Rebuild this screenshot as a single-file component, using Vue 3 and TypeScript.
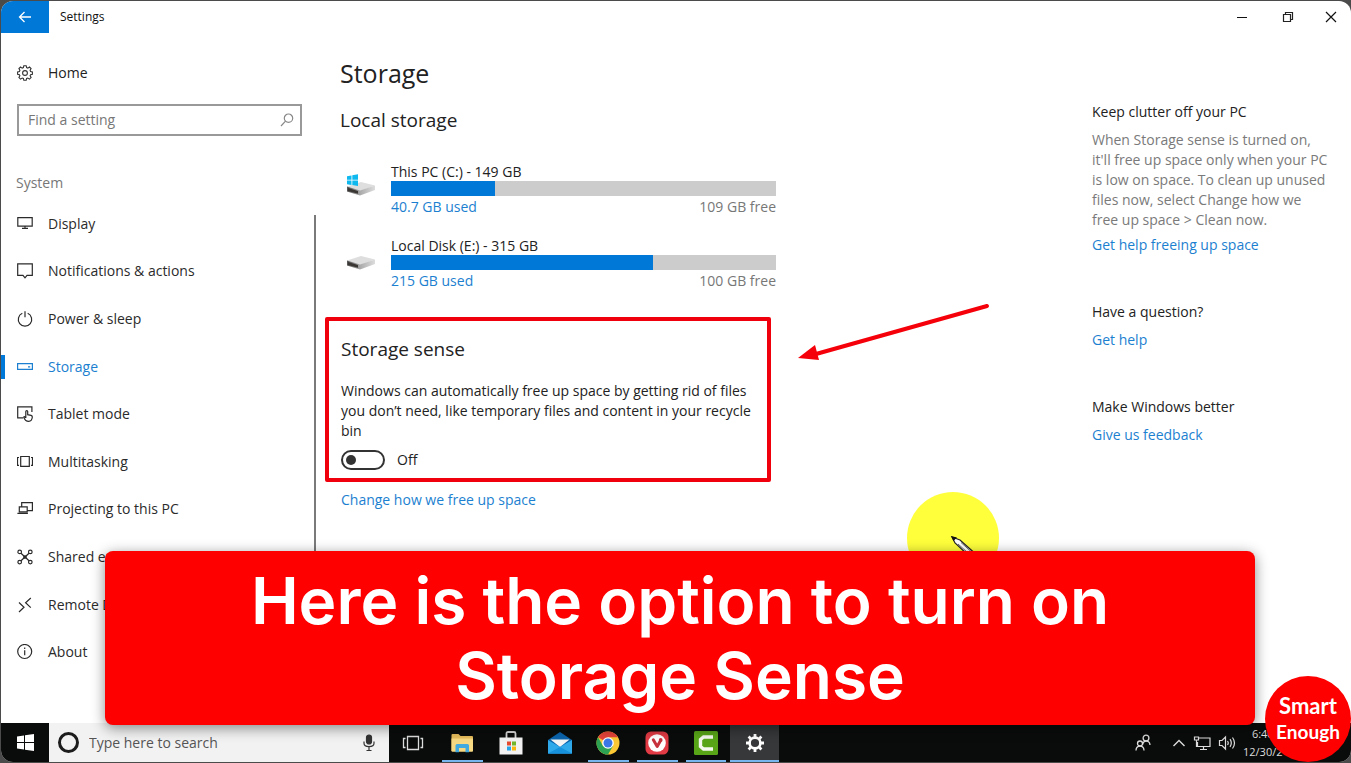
<script setup lang="ts">
import { ref } from 'vue'

interface NavItem {
  id: string
  label: string
}

interface Drive {
  id: string
  label: string
  used: string
  free: string
  percent: number
  system: boolean
}

interface HelpBlock {
  title: string
  text?: string
  link: string
}

interface TaskApp {
  id: string
  label: string
  running: boolean
}

const navItems: NavItem[] = [
  { id: 'display', label: 'Display' },
  { id: 'notifications', label: 'Notifications & actions' },
  { id: 'power', label: 'Power & sleep' },
  { id: 'storage', label: 'Storage' },
  { id: 'tablet', label: 'Tablet mode' },
  { id: 'multitasking', label: 'Multitasking' },
  { id: 'projecting', label: 'Projecting to this PC' },
  { id: 'shared', label: 'Shared experiences' },
  { id: 'remote', label: 'Remote Desktop' },
  { id: 'about', label: 'About' },
]

const drives: Drive[] = [
  { id: 'c', label: 'This PC (C:) - 149 GB', used: '40.7 GB used', free: '109 GB free', percent: 27, system: true },
  { id: 'e', label: 'Local Disk (E:) - 315 GB', used: '215 GB used', free: '100 GB free', percent: 68, system: false },
]

const helpBlocks: HelpBlock[] = [
  {
    title: 'Keep clutter off your PC',
    text: "When Storage sense is turned on, it'll free up space only when your PC is low on space. To clean up unused files now, select Change how we free up space > Clean now.",
    link: 'Get help freeing up space',
  },
  { title: 'Have a question?', link: 'Get help' },
  { title: 'Make Windows better', link: 'Give us feedback' },
]

const apps: TaskApp[] = [
  { id: 'taskview', label: 'Task view', running: false },
  { id: 'explorer', label: 'File Explorer', running: true },
  { id: 'store', label: 'Store', running: false },
  { id: 'mail', label: 'Mail', running: false },
  { id: 'chrome', label: 'Chrome', running: true },
  { id: 'vivaldi', label: 'Vivaldi', running: true },
  { id: 'camtasia', label: 'Camtasia', running: true },
  { id: 'settings', label: 'Settings', running: true },
]

const current = ref('storage')
const query = ref('')
const senseOn = ref(false)
</script>

<template>
  <div class="desktop">
    <div class="screen">
      <header class="titlebar">
        <button class="back" type="button" aria-label="Back">
          <svg width="14" height="12" viewBox="0 0 14 12" fill="none" stroke="#fff" stroke-width="1.3"><path d="M13 6H1.5M6.5 1 1.5 6l5 5" /></svg>
        </button>
        <span class="window-title">Settings</span>
        <div class="window-buttons">
          <button type="button" aria-label="Minimize">
            <svg width="12" height="12" viewBox="0 0 12 12" stroke="#111" stroke-width="1.2"><path d="M1 6.5h10" /></svg>
          </button>
          <button type="button" aria-label="Restore">
            <svg width="12" height="12" viewBox="0 0 12 12" fill="none" stroke="#222" stroke-width="1.2"><path d="M1.5 3.5h7v7h-7zM3.5 3.500V1.500h7v7h-2" /></svg>
          </button>
          <button type="button" aria-label="Close">
            <svg width="12" height="12" viewBox="0 0 12 12" stroke="#111" stroke-width="1.2"><path d="m1 1 10 10M11 1 1 11" /></svg>
          </button>
        </div>
      </header>

      <div class="content">
        <aside class="sidebar">
          <a class="home" href="#home">
            <svg class="icon" viewBox="0 0 16 16" fill="none" stroke="#333" stroke-width="1.1">
              <path d="M6.800 .7h2.400l.4 1.900 1.200.5 1.700-1.100 1.600 1.600-1 1.700.5 1.200 1.800.4v2.300l-1.800.4-.5 1.200 1 1.700-1.600 1.600-1.700-1.100-1.200.5-.4 1.800H6.800l-.4-1.800-1.200-.5-1.700 1.100-1.600-1.600 1-1.700-.5-1.200-1.800-.4V6.900l1.800-.4.5-1.200-1-1.700 1.600-1.600 1.700 1.100 1.200-.5z" />
              <circle cx="8" cy="8" r="2.400" />
            </svg>
            <span>Home</span>
          </a>
          <div class="search">
            <input v-model="query" type="text" placeholder="Find a setting" aria-label="Find a setting" />
            <svg width="14" height="14" viewBox="0 0 14 14" fill="none" stroke="#888" stroke-width="1.2"><circle cx="8.500" cy="5.200" r="4.200" /><path d="M5.500 8.200 1 13" /></svg>
          </div>
          <h2 class="group">System</h2>
          <nav class="nav" aria-label="System">
            <a
              v-for="item in navItems"
              :key="item.id"
              :href="'#' + item.id"
              :class="{ active: item.id === current }"
              @click.prevent="current = item.id"
            >
              <svg class="icon" viewBox="0 0 16 16" fill="none" stroke="currentColor" stroke-width="1.2">
                <template v-if="item.id === 'display'"><path d="M.8 1.600h14.400v8.600H.8zM8 10.200v2M5 12.300h6" /></template>
                <template v-else-if="item.id === 'notifications'"><path d="M.7 .8h14.600v11.500H10l-2 2.500-2-2.500H.7z" /></template>
                <template v-else-if="item.id === 'power'"><path d="M5.300 2.300a6.700 6.700 0 1 0 5.400 0M8 .3v6" /></template>
                <template v-else-if="item.id === 'storage'"><path d="M.6 4.700h14.800v5.600H.6zM11 7.800h2.200" /></template>
                <template v-else-if="item.id === 'tablet'"><path d="M6 11.800H.7V.9h14.200v5M8.800 12V5.600c0-1.300 1.900-1.300 1.900 0v3.100l3.400.7c1 .3 1.300 1 1.200 1.900-.3 2.500-1.300 4.100-3.600 4.100-2.600 0-4-1.600-4.900-3.900-.3-1.100 1.100-1.400 2 .5" /></template>
                <template v-else-if="item.id === 'multitasking'"><path d="M3.700 2.500h8.600v9.800H3.700zM2 3.500H.5v7.800H2M14 3.500h1.500v7.800H14" /></template>
                <template v-else-if="item.id === 'projecting'"><path d="M4.700 5.500V1.600h10.700v8H10.400M2.300 5.800h7.900v5H2.300zM.4 12.300h10.500" /></template>
                <template v-else-if="item.id === 'shared'">
                  <path d="m4 4.200 8 7.600M12 4.200l-8 7.600" />
                  <circle cx="2.700" cy="2.900" r="1.800" /><circle cx="13.300" cy="2.900" r="1.800" /><circle cx="2.700" cy="13.100" r="1.800" /><circle cx="13.300" cy="13.100" r="1.800" /><circle cx="8" cy="8" r="1.200" fill="currentColor" />
                </template>
                <template v-else-if="item.id === 'remote'"><path d="m2 5.500 5 4.800L2 15M13.800 1 8.600 5.800l5.200 4.800" /></template>
                <template v-else><circle cx="7.700" cy="7.500" r="7" /><path d="M7.700 6.300v5M7.700 3.500V5" /></template>
              </svg>
              <span>{{ item.label }}</span>
            </a>
          </nav>
        </aside>

        <main class="main">
          <h1>Storage</h1>
          <h2>Local storage</h2>
          <div class="drives">
            <section v-for="drive in drives" :key="drive.id" class="drive">
              <svg class="drive-icon" width="30" height="24" viewBox="0 0 30 24">
                <defs>
                  <linearGradient :id="'front-' + drive.id" x1="0" x2="1"><stop offset="0" stop-color="#555" /><stop offset="1" stop-color="#a8a8a8" /></linearGradient>
                  <linearGradient :id="'side-' + drive.id" x1="0" x2="1"><stop offset="0" stop-color="#aaa" /><stop offset="1" stop-color="#ddd" /></linearGradient>
                </defs>
                <path d="M1 13.500 15 9l14 3.500L14 18z" fill="#dedede" />
                <path d="M1 13.500 14 17.500v5L1 18.500z" :fill="`url(#front-${drive.id})`" />
                <path d="m14 17.500 15-5v4.500l-15 5.500z" :fill="`url(#side-${drive.id})`" />
                <path d="m2 15 10 3.100v2.600L2 17.900z" fill="#3a3634" />
                <path v-if="drive.system" d="M1 3.200 5.500 2.400v4.300H1zM6.300 2.200 12 1.200v5.500H6.300zM1 7.500h4.500v4.400L1 11.200zM6.300 7.500H12V13l-5.700-.9z" fill="#0fb8ee" />
              </svg>
              <div class="drive-body">
                <span class="drive-name">{{ drive.label }}</span>
                <div class="bar" role="progressbar" :aria-valuenow="drive.percent" aria-valuemin="0" aria-valuemax="100" :aria-label="drive.label">
                  <div class="fill" :style="{ width: drive.percent + '%' }"></div>
                </div>
                <div class="usage">
                  <a :href="'#drive-' + drive.id">{{ drive.used }}</a>
                  <span>{{ drive.free }}</span>
                </div>
              </div>
            </section>
          </div>

          <section class="sense">
            <h2>Storage sense</h2>
            <p>Windows can automatically free up space by getting rid of files you don’t need, like temporary files and content in your recycle bin</p>
            <label class="switch">
              <input v-model="senseOn" type="checkbox" role="switch" />
              <span>{{ senseOn ? 'On' : 'Off' }}</span>
            </label>
          </section>
          <a class="change" href="#change">Change how we free up space</a>
        </main>

        <aside class="help">
          <section v-for="block in helpBlocks" :key="block.title">
            <h3>{{ block.title }}</h3>
            <p v-if="block.text">{{ block.text }}</p>
            <a href="#help">{{ block.link }}</a>
          </section>
        </aside>
      </div>

      <footer class="taskbar">
        <button class="start" type="button" aria-label="Start">
          <svg width="17" height="17" viewBox="0 0 17 17" fill="#fff"><path d="M0 2.500 7 1.500V8H0zM8 1.300 17 0v8H8zM0 9h7v6.500l-7-1zM8 9h9v8l-9-1.300z" /></svg>
        </button>
        <div class="cortana">
          <span class="ring"></span>
          <input type="text" placeholder="Type here to search" aria-label="Type here to search" />
          <svg width="12" height="18" viewBox="0 0 12 18" fill="none" stroke="#333" stroke-width="1.200"><rect x="3.500" y="1" width="5" height="9" rx="2.500" fill="#333" /><path d="M1 7.500v1.700c0 4.500 10 4.500 10 0V7.500M6 13v3.500M3.500 16.500h5" /></svg>
        </div>
        <div class="apps">
          <button
            v-for="app in apps"
            :key="app.id"
            type="button"
            :aria-label="app.label"
            :class="{ running: app.running, focused: app.id === 'settings' }"
          >
            <svg width="24" height="24" viewBox="0 0 24 24">
              <template v-if="app.id === 'taskview'">
                <path d="M6.500 5.500h11v13h-11zM4.500 7.500h-2v9h2M19.500 7.500h2v9h-2" fill="none" stroke="#ddd" stroke-width="1.300" />
              </template>
              <template v-else-if="app.id === 'explorer'">
                <path d="M1.500 4q0-1 1-1h6l2 2h11.500q1 0 1 1v14h-21.500z" fill="#e7bd5c" />
                <path d="M1.500 7.500h21.500V20q0 .8-1 .8H2.500q-1 0-1-1z" fill="#f8d983" />
                <path d="M5.500 14.500q0-1.500 1.500-1.500h10.500q1.500 0 1.500 1.500v6.800h-3.500V17h-6.500v4.300H5.500z" fill="#3fa9e0" />
              </template>
              <template v-else-if="app.id === 'store'">
                <path d="M7.500 7V2.500q0-1.500 1.500-1.500h6q1.500 0 1.500 1.500V7" fill="none" stroke="#d8d8d8" stroke-width="1.800" />
                <path d="M.5 6.500h23v17H.5z" fill="#f2f2f2" />
                <path d="M8 10.500h4v4H8z" fill="#e64a2e" /><path d="M13 10.500h4v4h-4z" fill="#71b52b" /><path d="M8 15.500h4v4H8z" fill="#27a3e8" /><path d="M13 15.500h4v4h-4z" fill="#f7b90f" />
              </template>
              <template v-else-if="app.id === 'mail'">
                <path d="M0 9 12 1l12 8v13.500H0z" fill="#0b64ad" />
                <path d="M2.500 8.500h19L12 16z" fill="#f5f5f5" />
                <path d="m0 9 12 7 12-7v13.500H0z" fill="#2fa9ea" />
                <path d="m0 22.500 12-6.500 12 6.500z" fill="#1691dc" />
              </template>
              <template v-else-if="app.id === 'chrome'">
                <circle cx="12" cy="12" r="11.500" fill="#fcc934" />
                <path d="M12 12 2.040 6.250A11.500 11.500 0 0 1 21.960 6.250H12z" fill="#e5443a" />
                <path d="M2.040 6.250A11.500 11.500 0 0 0 12 23.500L17 15 12 12 7 15z" fill="#2ca152" />
                <circle cx="12" cy="12" r="5.800" fill="#fff" /><circle cx="12" cy="12" r="4.500" fill="#3b78e7" />
              </template>
              <template v-else-if="app.id === 'vivaldi'">
                <rect x=".5" y=".5" width="23" height="23" rx="5.500" fill="#e23b45" />
                <circle cx="12" cy="12" r="8.800" fill="#fff" />
                <path d="m8.300 8.800 3.900 6.700 3.100-5.500" fill="none" stroke="#c8323c" stroke-width="3" stroke-linecap="round" stroke-linejoin="round" />
                <circle cx="15.700" cy="9" r="1.900" fill="#c8323c" />
              </template>
              <template v-else-if="app.id === 'camtasia'">
                <rect width="24" height="24" rx="1.500" fill="#58a618" />
                <path d="M19 6H9.500L6.500 8.500v7l3 2.500H19" fill="none" stroke="#f4f8ee" stroke-width="3.400" />
              </template>
              <template v-else>
                <circle cx="12" cy="12" r="5.400" fill="none" stroke="#fff" stroke-width="2.600" />
                <path d="M12 3v3M12 18v3M3 12h3M18 12h3M5.600 5.600l2.100 2.100M16.300 16.300l2.100 2.100M18.400 5.600l-2.100 2.100M7.700 16.300l-2.100 2.100" stroke="#fff" stroke-width="2.800" />
              </template>
            </svg>
          </button>
        </div>
        <div class="tray">
          <button class="people" type="button" aria-label="People">
            <svg width="16" height="18" viewBox="0 0 16 18" fill="none" stroke="#ddd" stroke-width="1.300"><circle cx="11" cy="4" r="2.900" /><path d="M7.800 10.500c.3-4.500 6.800-4.500 7.200.5" /><circle cx="5" cy="9.500" r="2.500" /><path d="M1 16.500c.2-5.800 7.800-5.800 8 0" /></svg>
          </button>
          <button type="button" aria-label="Show hidden icons">
            <svg width="14" height="18" viewBox="0 0 14 18" fill="none" stroke="#ddd" stroke-width="1.400"><path d="m1.500 12 5.500-5.500 5.500 5.500" /></svg>
          </button>
          <button type="button" aria-label="Network">
            <svg width="18" height="18" viewBox="0 0 18 18" fill="none" stroke="#ddd" stroke-width="1.200"><path d="M5.500 4H17v8.500H4.500V8M10.500 12.500v3M7 15.500h7M1.500 3h4v3h-4zM3.500 6v6.500H5" /></svg>
          </button>
          <button type="button" aria-label="Volume">
            <svg width="18" height="18" viewBox="0 0 18 18" fill="none" stroke="#ddd" stroke-width="1.200"><path d="M1.500 6.500H4L7.500 3v12L4 11.500H1.500zM9.500 7q1.500 2 0 4M12 5.200q2.600 3.800 0 7.600M14.500 3.500q4 5.500 0 11" /></svg>
          </button>
          <div class="clock"><span>6:40</span><span>12/30/2</span></div>
          <button class="actions" type="button" aria-label="Action center">
            <svg width="16" height="18" viewBox="0 0 16 18" fill="none" stroke="#ddd" stroke-width="1.200"><path d="M1 2h14v11h-4l-2 3-2-3H1z" /></svg>
          </button>
        </div>
      </footer>

      <svg class="arrow" width="194" height="62" viewBox="0 0 194 62" aria-hidden="true">
        <path d="M189 5 18 53" stroke="#f5000a" stroke-width="4" stroke-linecap="round" />
        <path d="M0 57 17 44l4 15z" fill="#f5000a" />
      </svg>
      <svg class="pointer" width="96" height="96" viewBox="0 0 96 96" aria-hidden="true">
        <circle cx="48" cy="48" r="46" fill="#ffff3c" />
        <path d="m47 47 3 6 14 13 5-3.500L55 50z" fill="#fff" stroke="#222" stroke-width="1.200" />
        <path d="m53 54 10 9M56 52.500l10 9" stroke="#666" stroke-width="1" />
        <path d="m46 46 6 1.500-3.500 3.500z" fill="#111" />
      </svg>
      <div class="banner">
        <span>Here is the option to turn on</span>
        <span>Storage Sense</span>
      </div>
      <div class="badge">
        <span class="badge-top">Smart</span>
        <span class="badge-bottom">Enough</span>
      </div>
    </div>
  </div>
</template>

<style>
body {
  margin: 0;
  background: #4b4b4b;
}
</style>

<style scoped>
* {
  box-sizing: border-box;
}
.desktop {
  min-height: 100vh;
  padding: 1px 0 1px 1px;
  display: flex;
  background: #4b4b4b;
  font-family: 'Open Sans', 'Noto Sans', sans-serif;
  font-size: 14px;
  line-height: 20px;
  color: #222;
}
.screen {
  position: relative;
  flex: 1;
  display: flex;
  flex-direction: column;
  background: #fff;
  border-radius: 12px;
  overflow: hidden;
}
h1,
h2,
h3,
p {
  margin: 0;
  font-weight: 400;
}
a {
  color: #1c7fd0;
  text-decoration: none;
}
button {
  border: 0;
  padding: 0;
  background: none;
  display: flex;
  align-items: center;
  justify-content: center;
}
input {
  font: inherit;
  color: inherit;
}
.titlebar {
  display: flex;
  height: 32px;
}
.back {
  width: 48px;
  background: #0078d7;
}
.window-title {
  flex: 1;
  padding-left: 11px;
  font-size: 12px;
  line-height: 32px;
  color: #111;
}
.window-buttons {
  display: flex;
}
.window-buttons button {
  width: 46px;
}
.window-buttons button:last-child {
  width: 40px;
}
.content {
  flex: 1;
  display: flex;
}
.sidebar {
  width: 315px;
  display: flex;
  flex-direction: column;
  padding: 24px 0 47px;
}
.icon {
  flex: none;
  width: 16px;
  height: 16px;
}
.home {
  display: flex;
  align-items: center;
  gap: 15px;
  height: 32px;
  padding-left: 16px;
  color: #222;
}
.search {
  display: flex;
  align-items: center;
  height: 32px;
  margin: 15px 14px 0 16px;
  padding: 0 6px 0 9px;
  border: 2px solid #999;
}
.search input {
  flex: 1;
  min-width: 0;
  padding: 0;
  border: 0;
  outline: 0;
  background: none;
}
.search input::placeholder {
  color: #777;
  opacity: 1;
}
.group {
  margin-top: 35px;
  padding-left: 15px;
  font-size: 14px;
  line-height: 24px;
  color: #777;
}
.nav {
  position: relative;
  flex: 1;
  display: grid;
  grid-auto-rows: 1fr;
  margin-top: 5px;
}
.nav::after {
  content: '';
  position: absolute;
  top: 15px;
  right: 0;
  bottom: 0;
  width: 2px;
  background: #7a7a7a;
}
.nav a {
  position: relative;
  display: flex;
  align-items: center;
  gap: 15px;
  padding-left: 16px;
  color: #2b2b2b;
}
.nav a.active {
  color: #1c7fd0;
}
.nav a.active::before {
  content: '';
  position: absolute;
  left: 0;
  width: 4px;
  height: 24px;
  background: #0078d7;
}
.main {
  flex: 1;
  padding: 24px;
}
.main h1 {
  font-size: 25px;
  line-height: 32px;
}
.main h2 {
  font-size: 19px;
  line-height: 24px;
}
.main > h2 {
  margin-top: 19px;
}
.drives {
  display: grid;
  gap: 21px;
  max-width: 436px;
  margin-top: 31px;
}
.drive {
  display: flex;
  line-height: 18px;
}
.drive-icon {
  flex: none;
  margin: 10px 15px 0 6px;
}
.drive-body {
  flex: 1;
}
.drive-name {
  display: block;
}
.bar {
  height: 15px;
  margin-bottom: 2px;
  background: #ccc;
}
.fill {
  height: 100%;
  background: #0078d7;
}
.usage {
  display: flex;
  justify-content: space-between;
  color: #777;
}
.sense {
  max-width: 446px;
  margin: 27px 0 0 -15px;
  padding: 16px 8px 8px 12px;
  border: 4px solid #f0000c;
  border-radius: 2px;
}
.sense p {
  margin-top: 20px;
}
.switch {
  display: flex;
  align-items: center;
  gap: 12px;
  margin-top: 9px;
}
.switch input {
  appearance: none;
  width: 44px;
  height: 20px;
  margin: 0;
  padding: 3px;
  border: 2px solid #333;
  border-radius: 10px;
  background: #fff;
}
.switch input::before {
  content: '';
  display: block;
  width: 10px;
  height: 10px;
  border-radius: 50%;
  background: #333;
}
.switch input:checked {
  border-color: #0078d7;
  background: #0078d7;
}
.switch input:checked::before {
  margin-left: auto;
  background: #fff;
}
.change {
  display: inline-block;
  margin-top: 8px;
  padding-left: 1px;
}
.help {
  width: 259px;
  display: flex;
  flex-direction: column;
  gap: 47px;
  padding: 69px 22px 0 0;
}
.help h3 {
  font-size: 14px;
  margin-bottom: 8px;
}
.help p {
  margin-bottom: 5px;
  color: #7a7a7a;
}
.help a {
  display: block;
}
.taskbar {
  display: flex;
  height: 39px;
  background: #0a0c0b;
}
.start {
  width: 48px;
}
.cortana {
  width: 340px;
  display: flex;
  align-items: center;
  gap: 10px;
  padding: 0 14px 0 9px;
  background: #f2f2f2;
}
.ring {
  width: 21px;
  height: 21px;
  border: 3px solid #1c1c1c;
  border-radius: 50%;
}
.cortana input {
  flex: 1;
  min-width: 0;
  padding: 0;
  border: 0;
  outline: 0;
  background: none;
}
.cortana input::placeholder {
  color: #555;
  opacity: 1;
}
.apps {
  width: 390px;
  display: grid;
  grid-template-columns: repeat(8, 1fr);
}
.apps button {
  position: relative;
}
.apps .running::after {
  content: '';
  position: absolute;
  left: 4px;
  right: 4px;
  bottom: 0;
  height: 2px;
  background: #76b5ee;
}
.apps .focused {
  background: #363839;
}
.apps .focused::after {
  left: 0;
  right: 0;
}
.tray {
  flex: 1;
  display: flex;
  align-items: center;
  justify-content: flex-end;
  gap: 7px;
  padding-right: 12px;
  color: #ddd;
}
.people {
  margin-right: 14px;
}
.clock {
  width: 61px;
  display: grid;
  justify-content: start;
  justify-items: center;
  font-size: 11px;
  line-height: 18px;
}
.actions {
  margin-left: 12px;
}
.arrow {
  position: absolute;
  left: 797px;
  top: 300px;
}
.pointer {
  position: absolute;
  left: 904px;
  top: 489px;
}
.banner {
  position: absolute;
  left: 104px;
  right: 96px;
  bottom: 37px;
  display: flex;
  flex-direction: column;
  align-items: center;
  padding: 12px 0;
  border-radius: 8px;
  background: #fe0000;
  box-shadow: 0 3px 14px rgba(0, 0, 0, 0.45);
  color: #fff;
  font-family: Inter, sans-serif;
  font-size: 64px;
  font-weight: 600;
  line-height: 75px;
}
.badge {
  position: absolute;
  right: 0;
  bottom: 0;
  width: 86px;
  height: 86px;
  display: flex;
  flex-direction: column;
  align-items: center;
  justify-content: center;
  border-radius: 50%;
  background: #fe0000;
  color: #fff;
  font-family: Lato, sans-serif;
  font-weight: 700;
  line-height: 26px;
}
.badge-top {
  font-size: 22px;
}
.badge-bottom {
  font-size: 19px;
}
</style>
